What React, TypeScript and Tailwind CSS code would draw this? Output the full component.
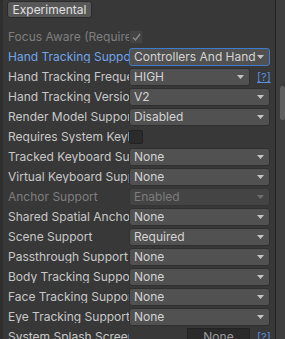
import React from 'react'

const font = { fontFamily: 'Inter, "Noto Sans", sans-serif' }

function Arrow({ dim }: { dim?: boolean }) {
    return (
        <svg width="7" height="4" viewBox="0 0 7 4" className="shrink-0">
            <path d="M0 0 L7 0 L3.5 4 Z" fill={dim ? '#6f6f6f' : '#c4c4c4'} />
        </svg>
    )
}

function Dropdown({ value, focus, dim, narrow }: { value: string; focus?: boolean; dim?: boolean; narrow?: boolean }) {
    return (
        <div
            className={`flex items-center h-[18px] rounded-[3px] border pl-[4px] pr-[5px] gap-[1px] ${narrow ? 'w-[121px]' : 'w-[141px]'} ${
                focus ? 'border-[#3d7ccf] bg-[#515151]' : dim ? 'border-[#353535] bg-[#444444]' : 'border-[#2f2f2f] bg-[#515151]'
            }`}
        >
            <span className={`flex-1 overflow-hidden whitespace-nowrap text-[12px] leading-none ${dim ? 'text-[#7c7c7c]' : 'text-[#d4d4d4]'}`}>
                {value}
            </span>
            <Arrow dim={dim} />
        </div>
    )
}

function Help() {
    return <span className="ml-[7px] text-[11px] leading-none text-[#5b8fe0] underline">[?]</span>
}

function Row({ label, tone, children }: { label: string; tone?: 'blue' | 'dim'; children: React.ReactNode }) {
    const color = tone === 'blue' ? 'text-[#72a4eb]' : tone === 'dim' ? 'text-[#7f7f7f]' : 'text-[#c8c8c8]'
    return (
        <div className="flex items-center h-[20px]">
            <div className={`w-[121px] shrink-0 overflow-hidden whitespace-nowrap text-[12px] leading-none ${color}`}>{label}</div>
            {children}
        </div>
    )
}

const menus: [string, string][] = [
    ['Tracked Keyboard Support', 'None'],
    ['Virtual Keyboard Support', 'None'],
]

const menus2: [string, string][] = [
    ['Shared Spatial Anchor Support', 'None'],
    ['Scene Support', 'Required'],
    ['Passthrough Support', 'None'],
    ['Body Tracking Support', 'None'],
    ['Face Tracking Support', 'None'],
    ['Eye Tracking Support', 'None'],
]

export default function App() {
    return (
        <div className="flex w-[285px] h-[339px] bg-[#383838] overflow-hidden select-none" style={font}>
            <div className="w-[3px] shrink-0 bg-[#2f2f2f]" />
            <div className="flex-1 pl-[5px] pt-[1px]">
                <div className="ml-[-1px] flex items-center justify-center w-[85px] h-[17px] rounded-[3px] border border-[#2b2b2b] bg-[#585858] text-[12px] text-[#e0e0e0] leading-none">
                    Experimental
                </div>
                <div className="mt-[9px]">
                    <Row label="Focus Aware (Requires Hand Tracking)" tone="dim">
                        <div className="flex items-center justify-center w-[14px] h-[14px] rounded-[2px] bg-[#444444] border border-[#3a3a3a]">
                            <svg width="9" height="8" viewBox="0 0 9 8">
                                <path d="M1 4.5 L3.5 7 L8 1" stroke="#8a8a8a" strokeWidth="1.4" fill="none" />
                            </svg>
                        </div>
                    </Row>
                    <Row label="Hand Tracking Support" tone="blue">
                        <Dropdown value="Controllers And Hands" focus />
                    </Row>
                    <Row label="Hand Tracking Frequency">
                        <Dropdown value="HIGH" narrow />
                        <Help />
                    </Row>
                    <Row label="Hand Tracking Version">
                        <Dropdown value="V2" />
                    </Row>
                    <Row label="Render Model Support">
                        <Dropdown value="Disabled" />
                    </Row>
                    <Row label="Requires System Keyboard">
                        <div className="w-[14px] h-[14px] rounded-[2px] bg-[#2b2b2b] border border-[#222222]" />
                    </Row>
                    {menus.map(([l, v]) => (
                        <Row key={l} label={l}>
                            <Dropdown value={v} />
                        </Row>
                    ))}
                    <Row label="Anchor Support" tone="dim">
                        <Dropdown value="Enabled" dim />
                    </Row>
                    {menus2.map(([l, v]) => (
                        <Row key={l} label={l}>
                            <Dropdown value={v} />
                        </Row>
                    ))}
                    <Row label="System Splash Screen">
                        <div className="ml-[58px] flex items-center justify-center w-[63px] h-[18px] bg-[#2a2a2a] border border-[#232323] text-[12px] text-[#9a9a9a] leading-none">
                            None
                        </div>
                        <Help />
                    </Row>
                </div>
            </div>
            <div className="w-px shrink-0 bg-[#232323]" />
            <div className="relative w-[9px] shrink-0 bg-[#3e3e3e]">
                <div className="absolute left-[4px] top-[86px] w-[5px] h-[34px] rounded-[3px] bg-[#5f5f5f]" />
            </div>
        </div>
    )
}
